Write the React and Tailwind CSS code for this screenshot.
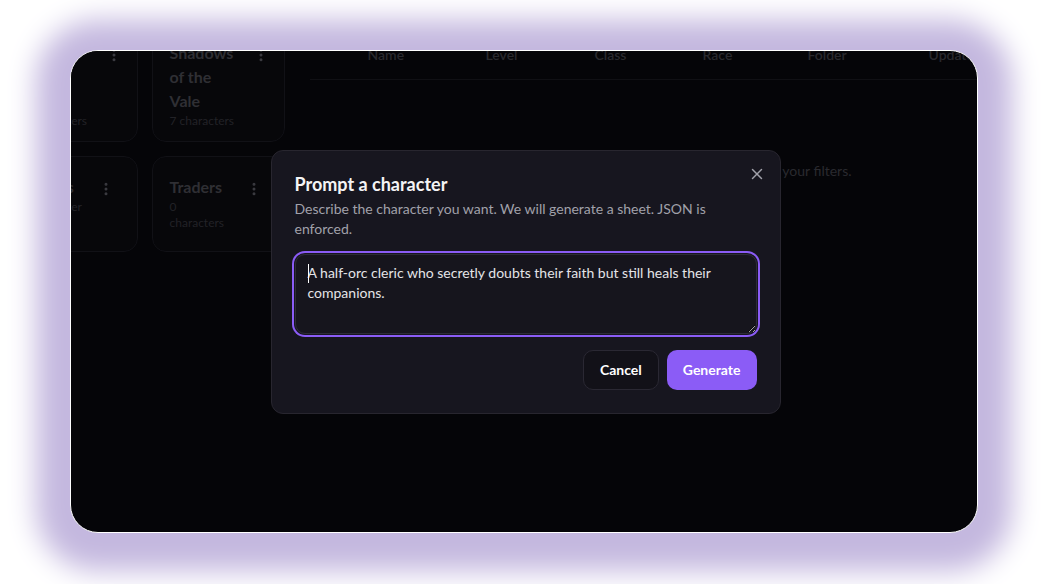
import React from "react";
import { X, EllipsisVertical } from "lucide-react";

const font = { fontFamily: "Lato, 'Noto Sans', 'Liberation Sans', sans-serif" };

function FolderCard({ h, pr, pt, title, sub }) {
  return (
    <div
      className={`flex items-start justify-between rounded-[14px] border border-[#111116] bg-[#07070a] pl-[17px] ${h} ${pr} ${pt}`}
    >
      <div className="flex flex-col">
        <div className="text-base font-bold leading-6 text-[#2f2f34]">
          {title.map((t, i) => (
            <div key={i}>{t}</div>
          ))}
        </div>
        <div className="text-xs leading-4 text-[#222227]">
          {sub.map((t, i) => (
            <div key={i}>{t}</div>
          ))}
        </div>
      </div>
      <EllipsisVertical size={16} className="mt-[6px] shrink-0 text-[#3a3a40]" strokeWidth={2.5} />
    </div>
  );
}

export default function App() {
  const headers = [
    ["Name", "w-[118px]"],
    ["Level", "w-[109px]"],
    ["Class", "w-[108px]"],
    ["Race", "w-[105px]"],
    ["Folder", "w-[121px]"],
    ["Updated", "w-[120px]"],
  ];
  return (
    <div className="flex h-[584px] w-[1047px] items-start justify-center overflow-hidden bg-white pt-[50px]" style={font}>
      <div className="relative h-[483px] w-[908px] overflow-hidden rounded-[28px] border border-white bg-[#050508] shadow-[0_4px_28px_34px_#c4b8df]">
        {/* background page content (dimmed) */}
        <div className="-ml-[66px] -mt-[29px] flex">
          <div className="grid w-[280px] grid-cols-[133px_133px] gap-[14px]">
            <FolderCard h="h-[120px]" pr="pr-[15px]" pt="pt-[18px]" title={["Main", "Quest", "Party"]} sub={["2 characters"]} />
            <FolderCard h="h-[120px]" pr="pr-[15px]" pt="pt-[18px]" title={["Shadows", "of the", "Vale"]} sub={["7 characters"]} />
            <FolderCard h="h-[96px]" pr="pr-[23px]" pt="pt-[18px]" title={["Villains"]} sub={["1 character"]} />
            <FolderCard h="h-[96px]" pr="pr-[22px]" pt="pt-[18px]" title={["Traders"]} sub={["0", "characters"]} />
          </div>
          <div className="ml-[25px] flex w-[800px] shrink-0 flex-col">
            <div className="flex border-b border-[#101014] pb-[14px] pl-[58px] pt-[23px]">
              {headers.map(([h, w]) => (
                <div key={h} className={`${w} shrink-0 text-sm font-semibold leading-5 text-[#29292e]`}>
                  {h}
                </div>
              ))}
            </div>
            <div className="mt-[81px] w-[542px] text-right text-sm leading-5 text-[#2a2a2f]">
              No characters match your filters.
            </div>
          </div>
        </div>

        {/* modal */}
        <div className="absolute left-[200px] top-[99px] w-[510px] rounded-[12px] border border-[#28262f] bg-[#17161f] p-[23px]">
          <button className="absolute right-[14px] top-[14px] text-[#a1a1aa]">
            <X size={18} strokeWidth={2} />
          </button>
          <h2 className="text-[18px] font-bold leading-5 text-[#f4f4f5]">Prompt a character</h2>
          <p className="mt-[5px] max-w-[420px] text-sm leading-5 text-[#a1a1aa]">
            Describe the character you want. We will generate a sheet. JSON is enforced.
          </p>
          <div className="relative mt-[15px]">
            <textarea
              className="block h-[80px] w-full rounded-[10px] border border-[#2e2c38] bg-[#16151d] px-3 py-2 text-sm leading-5 text-[#e4e4e7] outline-none ring-2 ring-[#8b5cf6] ring-offset-1 ring-offset-[#17161f]"
              style={font}
              defaultValue="A half-orc cleric who secretly doubts their faith but still heals their companions."
            />
            <div className="absolute left-[13px] top-[10px] h-[19px] w-px bg-white" />
          </div>
          <div className="mt-4 flex justify-end gap-2">
            <button className="h-10 rounded-[10px] border border-[#2a2833] bg-[#121118] px-4 text-sm font-bold text-white">
              Cancel
            </button>
            <button className="h-10 rounded-[10px] bg-[#8b5cf6] px-4 text-sm font-bold text-white">Generate</button>
          </div>
        </div>
      </div>
    </div>
  );
}
